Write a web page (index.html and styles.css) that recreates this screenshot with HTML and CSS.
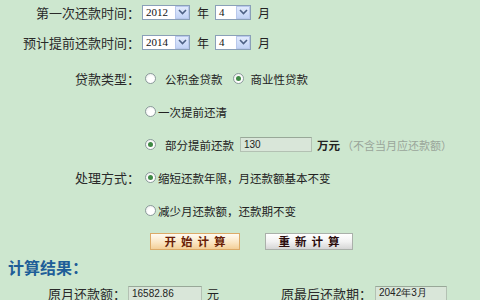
FILE: index.html
```html
<!DOCTYPE html>
<html>
<head>
    <meta charset="utf-8">
    <title>提前还款计算器</title>
    <link rel="stylesheet" href="styles.css">
</head>
<body>
    <div class="calc">
        <div class="row row-date first">
            <span class="label">第一次还款时间：</span>
            <div class="field">
                <span class="select sel-year"><span class="sel-val">2012</span><span class="sel-btn"><svg width="9" height="6" viewBox="0 0 9 6"><path d="M1 1 L4.5 4.5 L8 1" fill="none" stroke="#4d6185" stroke-width="1.6"/></svg></span></span>
                <span class="unit">年</span>
                <span class="select sel-month"><span class="sel-val">4</span><span class="sel-btn"><svg width="9" height="6" viewBox="0 0 9 6"><path d="M1 1 L4.5 4.5 L8 1" fill="none" stroke="#4d6185" stroke-width="1.6"/></svg></span></span>
                <span class="unit">月</span>
            </div>
        </div>
        <div class="row row-date">
            <span class="label">预计提前还款时间：</span>
            <div class="field">
                <span class="select sel-year"><span class="sel-val">2014</span><span class="sel-btn"><svg width="9" height="6" viewBox="0 0 9 6"><path d="M1 1 L4.5 4.5 L8 1" fill="none" stroke="#4d6185" stroke-width="1.6"/></svg></span></span>
                <span class="unit">年</span>
                <span class="select sel-month"><span class="sel-val">4</span><span class="sel-btn"><svg width="9" height="6" viewBox="0 0 9 6"><path d="M1 1 L4.5 4.5 L8 1" fill="none" stroke="#4d6185" stroke-width="1.6"/></svg></span></span>
                <span class="unit">月</span>
            </div>
        </div>

        <div class="row row-opt first-opt">
            <span class="label">贷款类型：</span>
            <div class="field">
                <span class="radio"></span>
                <span class="opt spaced">公积金贷款</span>
                <span class="radio checked second"></span>
                <span class="opt spaced2">商业性贷款</span>
            </div>
        </div>
        <div class="row row-opt">
            <span class="label"></span>
            <div class="field">
                <span class="radio"></span>
                <span class="opt tight">一次提前还清</span>
            </div>
        </div>
        <div class="row row-opt">
            <span class="label"></span>
            <div class="field">
                <span class="radio checked"></span>
                <span class="opt spaced">部分提前还款</span>
                <span class="textbox amount">130</span>
                <span class="unit-bold">万元</span>
                <span class="note">（不含当月应还款额）</span>
            </div>
        </div>
        <div class="row row-opt">
            <span class="label">处理方式：</span>
            <div class="field">
                <span class="radio checked"></span>
                <span class="opt tight">缩短还款年限，月还款额基本不变</span>
            </div>
        </div>
        <div class="row row-opt">
            <span class="label"></span>
            <div class="field">
                <span class="radio"></span>
                <span class="opt tight">减少月还款额，还款期不变</span>
            </div>
        </div>

        <div class="row row-buttons">
            <span class="label"></span>
            <div class="field">
                <button class="btn btn-start">开始计算</button>
                <button class="btn btn-reset">重新计算</button>
            </div>
        </div>

        <h2 class="result-title">计算结果：</h2>
        <div class="result-row">
            <span class="result-label first-col">原月还款额：</span>
            <span class="textbox result-box">16582.86</span>
            <span class="result-unit">元</span>
            <span class="result-label second-col">原最后还款期：</span>
            <span class="textbox result-box narrow">2042年3月</span>
        </div>
    </div>
</body>
</html>
```

FILE: styles.css
```css
body {
    margin: 0;
    background-color: #cde7cf;
    font-family: "Noto Sans CJK SC", "Liberation Sans", sans-serif;
    color: #222;
    overflow: hidden;
}
.calc {
    width: 480px;
}
.row {
    display: flex;
    align-items: center;
}
.row .label {
    width: 140px;
    flex: none;
    text-align: right;
    font-size: 13px;
    color: #2a2a2a;
}
.field {
    display: flex;
    align-items: center;
}
.row-date {
    height: 30px;
}
.row-date.first {
    margin-top: -3px;
}
.row-date .field {
    padding-left: 2px;
}
.select {
    display: flex;
    align-items: center;
    height: 15px;
    box-sizing: border-box;
    border: 1px solid #8aa0b8;
    background-color: #fff;
}
.sel-year {
    width: 48px;
}
.sel-month {
    width: 36px;
}
.sel-val {
    flex: 1;
    padding-left: 3px;
    font-family: "Liberation Serif", serif;
    font-size: 11px;
    line-height: 13px;
    color: #111;
}
.sel-btn {
    width: 14px;
    height: 13px;
    box-sizing: border-box;
    border: 1px solid #b8c8ec;
    background: linear-gradient(#e2ebfd, #c2d3f6);
    display: flex;
    align-items: center;
    justify-content: center;
}
.unit {
    font-size: 12px;
    margin: 0 6px 0 7px;
}
.row-opt {
    height: 33px;
}
.row-opt.first-opt {
    margin-top: 5px;
}
.row-opt .field {
    padding-left: 5px;
}
.radio {
    width: 11px;
    height: 11px;
    box-sizing: border-box;
    border: 1px solid #8c9a9c;
    border-radius: 50%;
    background: radial-gradient(circle at 60% 65%, #fff 40%, #e4e8e4 100%);
    display: flex;
    align-items: center;
    justify-content: center;
    flex: none;
}
.radio.checked::after {
    content: "";
    width: 5px;
    height: 5px;
    border-radius: 50%;
    background-color: #3f8a45;
}
.radio.second {
    margin-left: 10px;
}
.opt {
    font-size: 11.5px;
    color: #222;
}
.opt.spaced {
    margin-left: 9px;
}
.opt.spaced2 {
    margin-left: 7px;
}
.opt.tight {
    margin-left: 2px;
}
.textbox {
    display: flex;
    align-items: center;
    box-sizing: border-box;
    border: 1px solid #b3c1b3;
    border-top-color: #98a898;
    background-color: #d9e6d9;
    font-family: "Liberation Sans", sans-serif;
    color: #222;
}
.amount {
    width: 72px;
    height: 15px;
    margin-left: 6px;
    padding-left: 3px;
    font-size: 10px;
}
.unit-bold {
    font-size: 11.5px;
    font-weight: bold;
    margin-left: 5px;
    color: #222;
}
.note {
    font-size: 11px;
    color: #9aa59a;
    margin-left: 2px;
}
.row-buttons {
    height: 28px;
}
.row-buttons .field {
    padding-left: 10px;
    gap: 25px;
}
.btn {
    height: 17px;
    padding: 0;
    font-family: "Noto Sans CJK SC", sans-serif;
    font-size: 11.5px;
    font-weight: bold;
    letter-spacing: 5px;
    text-indent: 5px;
    line-height: 15px;
    cursor: pointer;
}
.btn-start {
    width: 90px;
    border: 1px solid #dcaa68;
    background: linear-gradient(#fffbf2, #fbe6c4 55%, #f3cf98);
    color: #6a1e06;
}
.btn-reset {
    width: 88px;
    border: 1px solid #aab0aa;
    background: linear-gradient(#ffffff, #f2f2f2 50%, #d6d6d6);
    color: #2b0c0c;
}
.result-title {
    margin: 1px 0 0 8px;
    height: 22px;
    font-size: 16px;
    line-height: 22px;
    font-weight: bold;
    color: #1e5e98;
}
.result-row {
    display: flex;
    align-items: center;
    height: 26px;
    margin-top: 2px;
}
.result-label {
    text-align: right;
    font-size: 13px;
    color: #2a2a2a;
}
.first-col {
    width: 126px;
}
.second-col {
    width: 152px;
}
.result-box {
    width: 74px;
    height: 15px;
    margin-left: 2px;
    padding-left: 3px;
    font-size: 10px;
}
.result-box.narrow {
    width: 72px;
    margin-left: 3px;
}
.result-unit {
    width: 13px;
    margin-left: 5px;
    font-size: 12px;
}
```
